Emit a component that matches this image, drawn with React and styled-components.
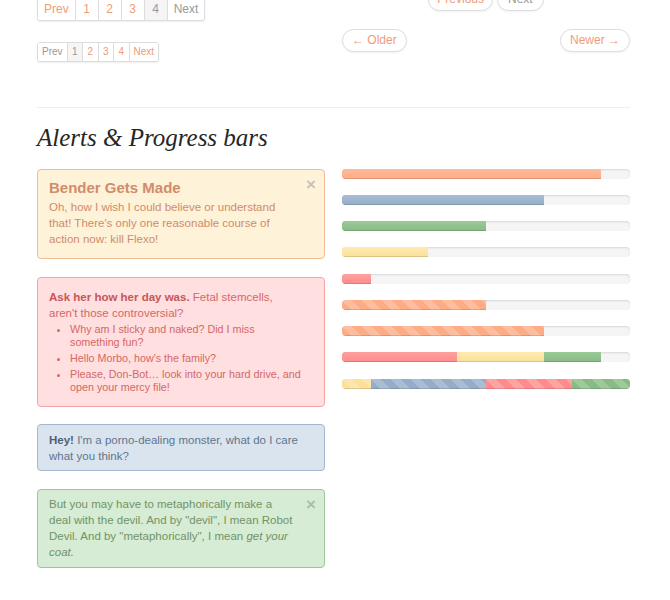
import React from 'react'
import styled, { createGlobalStyle } from 'styled-components'

const GlobalStyle = createGlobalStyle`
	body {
		margin: 0;
		background: #fff;
		color: #333;
		font-family: "Liberation Sans", Arial, sans-serif;
	}
`

const LINK = '#ef9b78'

const Page = styled.div`
	width: 593px;
	padding: 0 0 40px 37px;
`

const TopRow = styled.div`
	display: grid;
	grid-template-columns: 288px 288px;
	column-gap: 17px;
	align-items: start;
	margin-top: -2px;
`

const Column = styled.div`
	display: flex;
	flex-direction: column;
	align-items: flex-start;
	gap: ${p => p.$gap}px;
	margin-top: ${p => p.$offset || 0}px;
`

const Pagination = styled.ul`
	display: flex;
	margin: 0;
	padding: 0;
	list-style: none;
	background: #fff;
	border: 1px solid #ddd;
	border-radius: 3px;
	box-shadow: 0 1px 2px rgba(0, 0, 0, 0.07);
	overflow: hidden;
`

const PageItem = styled.li`
	box-sizing: border-box;
	min-width: ${p => (p.$small ? 15.5 : 23)}px;
	padding: 0 ${p => (p.$small ? 4 : 6)}px;
	height: ${p => (p.$small ? 18 : 21)}px;
	line-height: ${p => (p.$small ? 18 : 21)}px;
	font-size: ${p => (p.$small ? 10 : 12)}px;
	text-align: center;
	color: ${p => (p.$active || p.$disabled ? '#999' : LINK)};
	background: ${p => (p.$active ? '#f5f5f5' : '#fff')};

	& + & {
		border-left: 1px solid #ddd;
	}
`

const Pager = styled.div`
	display: flex;
	width: 100%;
	justify-content: ${p => (p.$spread ? 'space-between' : 'center')};
	gap: 4px;
`

const PagerLink = styled.span`
	box-sizing: border-box;
	height: 23px;
	line-height: 21px;
	padding: 0 ${p => p.$pad || 9}px;
	background: #fff;
	border: 1px solid #ddd;
	border-radius: 12px;
	box-shadow: 0 1px 2px rgba(0, 0, 0, 0.05);
	font-size: 12px;
	color: ${p => (p.$disabled ? '#999' : LINK)};
`

const Divider = styled.hr`
	margin: 45px 0 0;
	border: 0;
	border-top: 1px solid #eee;
`

const SectionTitle = styled.h2`
	margin: 15px 0 0;
	font-family: "Liberation Serif", Georgia, serif;
	font-style: italic;
	font-weight: normal;
	font-size: 25px;
	line-height: 30px;
	color: #262626;
`

const Section = styled.div`
	display: grid;
	grid-template-columns: 288px 288px;
	column-gap: 17px;
	align-items: start;
	margin-top: 16px;
`

const AlertStack = styled.div`
	display: flex;
	flex-direction: column;
	gap: 17.5px;
`

const tones = {
	warning: { bg: '#fef2d9', border: '#f0bd97', color: '#d08c6b', strong: '#c67a56' },
	error: { bg: '#ffdfdf', border: '#f3a5a5', color: '#d56767', strong: '#c95656' },
	info: { bg: '#d9e4ef', border: '#a4b7cc', color: '#62748b', strong: '#4d5f77' },
	success: { bg: '#d6ecd4', border: '#9bc79a', color: '#729367', strong: '#5f8356' },
}

const Alert = styled.div`
	position: relative;
	padding: ${p => (p.$block ? 11 : 6.5)}px ${p => (p.$closable ? 28 : 20)}px
		${p => (p.$block ? 11 : 6.5)}px 11px;
	background: ${p => tones[p.$tone].bg};
	border: 1px solid ${p => tones[p.$tone].border};
	border-radius: 4px;
	color: ${p => tones[p.$tone].color};
	font-size: 11.5px;
	line-height: 16px;

	strong {
		color: ${p => tones[p.$tone].strong};
	}
`

const Close = styled.span`
	position: absolute;
	top: 6px;
	right: 8px;
	font-size: 17px;
	font-weight: bold;
	line-height: 17px;
	color: #000;
	opacity: 0.2;
`

const AlertHeading = styled.h4`
	margin: 0 0 4px;
	font-size: 15px;
	line-height: 14px;
	font-weight: bold;
`

const AlertText = styled.p`
	margin: 0;
`

const AlertList = styled.ul`
	margin: 2px 0 0;
	padding: 0 0 0 21px;

	li {
		font-size: 10.75px;
		line-height: 13.6px;
	}

	li + li {
		margin-top: 2.2px;
	}
`

const ProgressStack = styled.div`
	display: flex;
	flex-direction: column;
	gap: 16.25px;
	margin-top: -0.5px;
`

const Progress = styled.div`
	display: flex;
	height: 10px;
	background: #f5f5f5;
	border-radius: 4px;
	box-shadow: inset 0 1px 2px rgba(0, 0, 0, 0.12);
	overflow: hidden;
`

const barColors = {
	orange: ['#ffbb9a', '#feac86'],
	blue: ['#a6bdd5', '#95adc8'],
	green: ['#9acb97', '#87ba85'],
	yellow: ['#feeab1', '#fce09a'],
	red: ['#ff9f9f', '#fe8c8c'],
}

const stripes =
	'linear-gradient(45deg, rgba(255,255,255,0.2) 25%, transparent 25%, transparent 50%, rgba(255,255,255,0.2) 50%, rgba(255,255,255,0.2) 75%, transparent 75%, transparent)'

const Bar = styled.div`
	height: 100%;
	background-color: ${p => barColors[p.$tone][1]};
	background-image: ${p =>
		p.$striped
			? stripes
			: `linear-gradient(to bottom, ${barColors[p.$tone][0]}, ${barColors[p.$tone][1]})`};
	background-size: ${p => (p.$striped ? '20px 20px' : 'auto')};
	box-shadow: inset 0 -1px 0 rgba(0, 0, 0, 0.13);
`

const progressRows = [
	[{ tone: 'orange', value: 90 }],
	[{ tone: 'blue', value: 70 }],
	[{ tone: 'green', value: 50 }],
	[{ tone: 'yellow', value: 30 }],
	[{ tone: 'red', value: 10 }],
	[{ tone: 'orange', value: 50, striped: true }],
	[{ tone: 'orange', value: 70, striped: true }],
	[
		{ tone: 'red', value: 40 },
		{ tone: 'yellow', value: 30 },
		{ tone: 'green', value: 20 },
	],
	[
		{ tone: 'yellow', value: 10, striped: true },
		{ tone: 'blue', value: 40, striped: true },
		{ tone: 'red', value: 30, striped: true },
		{ tone: 'green', value: 20, striped: true },
	],
]

export default function App() {
	return (
		<Page>
			<GlobalStyle />
			<TopRow>
				<Column $gap={21}>
					<Pagination>
						<PageItem>Prev</PageItem>
						<PageItem>1</PageItem>
						<PageItem>2</PageItem>
						<PageItem>3</PageItem>
						<PageItem $active>4</PageItem>
						<PageItem $disabled>Next</PageItem>
					</Pagination>
					<Pagination>
						<PageItem $small $disabled>Prev</PageItem>
						<PageItem $small $active>1</PageItem>
						<PageItem $small>2</PageItem>
						<PageItem $small>3</PageItem>
						<PageItem $small>4</PageItem>
						<PageItem $small>Next</PageItem>
					</Pagination>
				</Column>
				<Column $gap={18} $offset={-10}>
					<Pager>
						<PagerLink $pad={8}>Previous</PagerLink>
						<PagerLink $pad={10} $disabled>Next</PagerLink>
					</Pager>
					<Pager $spread>
						<PagerLink>← Older</PagerLink>
						<PagerLink>Newer →</PagerLink>
					</Pager>
				</Column>
			</TopRow>

			<Divider />
			<SectionTitle>Alerts &amp; Progress bars</SectionTitle>

			<Section>
				<AlertStack>
					<Alert $tone="warning" $block $closable>
						<Close>×</Close>
						<AlertHeading>Bender Gets Made</AlertHeading>
						<AlertText>
							Oh, how I wish I could believe or understand that! There's only one
							reasonable course of action now: kill Flexo!
						</AlertText>
					</Alert>
					<Alert $tone="error" $block>
						<AlertText>
							<strong>Ask her how her day was.</strong> Fetal stemcells, aren't those
							controversial?
						</AlertText>
						<AlertList>
							<li>Why am I sticky and naked? Did I miss something fun?</li>
							<li>Hello Morbo, how's the family?</li>
							<li>Please, Don-Bot… look into your hard drive, and open your mercy file!</li>
						</AlertList>
					</Alert>
					<Alert $tone="info">
						<strong>Hey!</strong> I'm a porno-dealing monster, what do I care what you
						think?
					</Alert>
					<Alert $tone="success" $closable>
						<Close>×</Close>
						But you may have to metaphorically make a deal with the devil. And by
						"devil", I mean Robot Devil. And by "metaphorically", I mean{' '}
						<em>get your coat.</em>
					</Alert>
				</AlertStack>

				<ProgressStack>
					{progressRows.map((row, i) => (
						<Progress key={i}>
							{row.map((bar, j) => (
								<Bar
									key={j}
									$tone={bar.tone}
									$striped={bar.striped}
									style={{ width: `${bar.value}%` }}
								/>
							))}
						</Progress>
					))}
				</ProgressStack>
			</Section>
		</Page>
	)
}
